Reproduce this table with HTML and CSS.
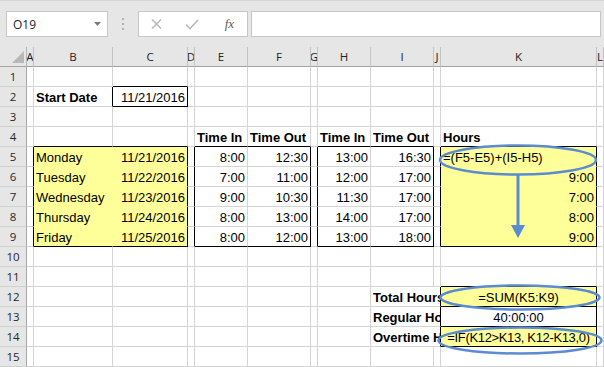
FILE: index.html
```html
<!DOCTYPE html>
<html lang="en">
<head>
<meta charset="utf-8">
<title>Timesheet</title>
<link rel="stylesheet" href="styles.css">
</head>
<body>
<div class="toolbar">
  <div class="namebox"><span>O19</span><svg class="caret" width="7" height="4" viewBox="0 0 7 4"><polygon points="0,0 7,0 3.5,4"/></svg></div>
  <div class="grip"><i></i><i></i><i></i></div>
  <div class="fxbox">
    <span class="slot"><svg width="11" height="10" viewBox="0 0 11 10"><path d="M1 0.5 L10 9.5 M10 0.5 L1 9.5"/></svg></span>
    <span class="slot"><svg width="14" height="11" viewBox="0 0 14 11"><path d="M1 5.5 L5 9.5 L13 1"/></svg></span>
    <span class="slot fx">fx</span>
  </div>
  <div class="formula"></div>
</div>

<div class="sheet">
  <div class="corner"><svg width="12" height="12" viewBox="0 0 12 12"><polygon points="12,0 12,12 0,12"/></svg></div>
  <div class="ch">A</div><div class="ch">B</div><div class="ch">C</div><div class="ch">D</div><div class="ch">E</div><div class="ch">F</div><div class="ch">G</div><div class="ch">H</div><div class="ch">I</div><div class="ch">J</div><div class="ch">K</div><div class="ch">L</div>

  <div class="rh">1</div><div class="c"></div><div class="c"></div><div class="c kb"></div><div class="c"></div><div class="c"></div><div class="c"></div><div class="c"></div><div class="c"></div><div class="c"></div><div class="c"></div><div class="c"></div><div class="c"></div>

  <div class="rh">2</div><div class="c"></div><div class="c b kr">Start Date</div><div class="c r kr kb">11/21/2016</div><div class="c"></div><div class="c"></div><div class="c"></div><div class="c"></div><div class="c"></div><div class="c"></div><div class="c"></div><div class="c"></div><div class="c"></div>

  <div class="rh">3</div><div class="c"></div><div class="c"></div><div class="c"></div><div class="c"></div><div class="c"></div><div class="c"></div><div class="c"></div><div class="c"></div><div class="c"></div><div class="c"></div><div class="c"></div><div class="c"></div>

  <div class="rh">4</div><div class="c"></div><div class="c kb"></div><div class="c kb"></div><div class="c"></div><div class="c b kb">Time In</div><div class="c b kb">Time Out</div><div class="c"></div><div class="c b kb">Time In</div><div class="c b kb">Time Out</div><div class="c"></div><div class="c b kb">Hours</div><div class="c"></div>

  <div class="rh">5</div><div class="c kr"></div><div class="c y">Monday</div><div class="c y r kr">11/21/2016</div><div class="c kr"></div><div class="c r">8:00</div><div class="c r kr">12:30</div><div class="c kr"></div><div class="c r">13:00</div><div class="c r kr">16:30</div><div class="c kr"></div><div class="c y kr">=(F5-E5)+(I5-H5)</div><div class="c"></div>

  <div class="rh">6</div><div class="c kr"></div><div class="c y">Tuesday</div><div class="c y r kr">11/22/2016</div><div class="c kr"></div><div class="c r">7:00</div><div class="c r kr">11:00</div><div class="c kr"></div><div class="c r">12:00</div><div class="c r kr">17:00</div><div class="c kr"></div><div class="c y r kr">9:00</div><div class="c"></div>

  <div class="rh">7</div><div class="c kr"></div><div class="c y">Wednesday</div><div class="c y r kr">11/23/2016</div><div class="c kr"></div><div class="c r">9:00</div><div class="c r kr">10:30</div><div class="c kr"></div><div class="c r">11:30</div><div class="c r kr">17:00</div><div class="c kr"></div><div class="c y r kr">7:00</div><div class="c"></div>

  <div class="rh">8</div><div class="c kr"></div><div class="c y">Thursday</div><div class="c y r kr">11/24/2016</div><div class="c kr"></div><div class="c r">8:00</div><div class="c r kr">13:00</div><div class="c kr"></div><div class="c r">14:00</div><div class="c r kr">17:00</div><div class="c kr"></div><div class="c y r kr">8:00</div><div class="c"></div>

  <div class="rh">9</div><div class="c kr"></div><div class="c y kb">Friday</div><div class="c y r kr kb">11/25/2016</div><div class="c kr"></div><div class="c r kb">8:00</div><div class="c r kr kb">12:00</div><div class="c kr"></div><div class="c r kb">13:00</div><div class="c r kr kb">18:00</div><div class="c kr"></div><div class="c y r kr kb">9:00</div><div class="c"></div>

  <div class="rh">10</div><div class="c"></div><div class="c"></div><div class="c"></div><div class="c"></div><div class="c"></div><div class="c"></div><div class="c"></div><div class="c"></div><div class="c"></div><div class="c"></div><div class="c"></div><div class="c"></div>

  <div class="rh">11</div><div class="c"></div><div class="c"></div><div class="c"></div><div class="c"></div><div class="c"></div><div class="c"></div><div class="c"></div><div class="c"></div><div class="c"></div><div class="c"></div><div class="c kb"></div><div class="c"></div>

  <!-- labels in I spill across the empty J column and are cut at K -->
  <div class="rh">12</div><div class="c"></div><div class="c"></div><div class="c"></div><div class="c"></div><div class="c"></div><div class="c"></div><div class="c"></div><div class="c"></div><div class="c b lbl kr">Total Hours</div><div class="c y ctr kr kb">=SUM(K5:K9)</div><div class="c"></div>

  <div class="rh">13</div><div class="c"></div><div class="c"></div><div class="c"></div><div class="c"></div><div class="c"></div><div class="c"></div><div class="c"></div><div class="c"></div><div class="c b lbl kr">Regular Hours</div><div class="c w ctr kr kb">40:00:00</div><div class="c"></div>

  <div class="rh">14</div><div class="c"></div><div class="c"></div><div class="c"></div><div class="c"></div><div class="c"></div><div class="c"></div><div class="c"></div><div class="c"></div><div class="c b lbl kr">Overtime Hours</div><div class="c y ctr kr kb tight">=IF(K12&gt;K13, K12-K13,0)</div><div class="c"></div>

  <div class="rh">15</div><div class="c"></div><div class="c"></div><div class="c"></div><div class="c"></div><div class="c"></div><div class="c"></div><div class="c"></div><div class="c"></div><div class="c"></div><div class="c"></div><div class="c"></div><div class="c"></div>

  <!-- callout ovals and fill-down arrow drawn over the Hours column -->
  <svg class="marks" width="604" height="320" viewBox="0 0 604 320">
    <ellipse cx="518" cy="113" rx="78" ry="14.5"/>
    <line x1="518" y1="127.5" x2="518" y2="179"/>
    <polygon class="head" points="511,178 525,178 518,191"/>
    <ellipse cx="520" cy="250.5" rx="79.5" ry="12"/>
    <ellipse cx="520" cy="293.5" rx="81.5" ry="13"/>
  </svg>
</div>
</body>
</html>
```

FILE: styles.css
```css
html, body {
  margin: 0;
  padding: 0;
}

body {
  width: 604px;
  height: 367px;
  overflow: hidden;
  background: #fff;
  font-family: "Liberation Sans", Arial, sans-serif;
}

/* ---- name box + formula bar ---- */
.toolbar {
  box-sizing: border-box;
  height: 47px;
  background: #e6e6e6;
  border-top: 1px solid #d6d6d6;
  padding: 10px 0 0 6px;
  display: flex;
  align-items: flex-start;
}

.namebox {
  box-sizing: border-box;
  width: 102px;
  height: 26px;
  background: #fff;
  border: 1px solid #c6c6c6;
  display: flex;
  align-items: center;
  padding: 0 6px;
  font: 12px "Open Sans", sans-serif;
  color: #262626;
}

.namebox span {
  flex: 1;
}

.caret polygon {
  fill: #7b7b7b;
}

.grip {
  width: 30px;
  height: 26px;
  display: flex;
  flex-direction: column;
  align-items: center;
  justify-content: center;
  gap: 3px;
}

.grip i {
  display: block;
  width: 2px;
  height: 2px;
  background: #b4b4b4;
}

.fxbox {
  box-sizing: border-box;
  width: 110px;
  height: 26px;
  background: #fff;
  border: 1px solid #c6c6c6;
  display: flex;
}

.slot {
  width: 36px;
  display: flex;
  align-items: center;
  justify-content: center;
}

.slot path {
  fill: none;
  stroke: #b9b9b9;
  stroke-width: 1.6;
}

.fx {
  font: italic 13px "Liberation Serif", serif;
  color: #5a5a5a;
  padding-left: 2px;
}

.formula {
  box-sizing: border-box;
  width: 350px;
  height: 26px;
  margin-left: 3px;
  background: #fff;
  border: 1px solid #c6c6c6;
}

/* ---- worksheet grid ---- */
.sheet {
  position: relative;
  display: grid;
  grid-template-columns: 27px 7px 79px 75px 7px 53px 63px 7px 53px 63px 7px 156px 7px;
  grid-template-rows: repeat(16, 20px);
}

.corner,
.ch,
.rh,
.c {
  box-sizing: border-box;
}

.corner {
  background: #e6e6e6;
  border-right: 1px solid #b5b5b5;
  border-bottom: 1px solid #a3a3a3;
  display: flex;
  justify-content: flex-end;
  align-items: flex-end;
  padding: 0 2px 3px 0;
}

.corner polygon {
  fill: #b8b8b8;
}

.ch {
  background: #e6e6e6;
  border-right: 1px solid #c3c3c3;
  border-bottom: 1px solid #a3a3a3;
  font: 11.5px "Open Sans", sans-serif;
  color: #222;
  line-height: 18px;
  padding-top: 1px;
  text-align: center;
  overflow: hidden;
  white-space: nowrap;
  display: flex;
  justify-content: center;
}

.rh {
  background: #e6e6e6;
  border-right: 1px solid #a8a8a8;
  border-bottom: 1px solid #d0d0d0;
  font: 11.5px "Open Sans", sans-serif;
  color: #262626;
  line-height: 19px;
  text-align: center;
}

.c {
  border-right: 1px solid #d4d4d4;
  border-bottom: 1px solid #d4d4d4;
  font-size: 13px;
  line-height: 17px;
  padding: 2px 2px 0 2px;
  color: #000;
  white-space: nowrap;
}

.b { font-weight: bold; }
.r { text-align: right; }
.ctr { text-align: center; }
.tight { letter-spacing: -0.35px; padding: 2px 0 0 0; }

/* overflowing label spans columns I and J, clipped at the K border */
.lbl {
  grid-column: span 2;
  overflow: hidden;
}

/* yellow input fill hides the gridlines inside the range */
.y {
  background: #ffff99;
  border-right-color: #ffff99;
  border-bottom-color: #ffff99;
}

.w { background: #fff; }

/* thin black range borders */
.kr { border-right-color: #000; }
.kb { border-bottom-color: #000; }

/* annotation layer */
.marks {
  position: absolute;
  left: 0;
  top: 0;
  pointer-events: none;
}

.marks ellipse,
.marks line {
  fill: none;
  stroke: #5b8bd0;
  stroke-width: 2.5;
}

.marks line {
  stroke-width: 3;
}

.marks .head {
  fill: #5b8bd0;
  stroke: none;
}
```
